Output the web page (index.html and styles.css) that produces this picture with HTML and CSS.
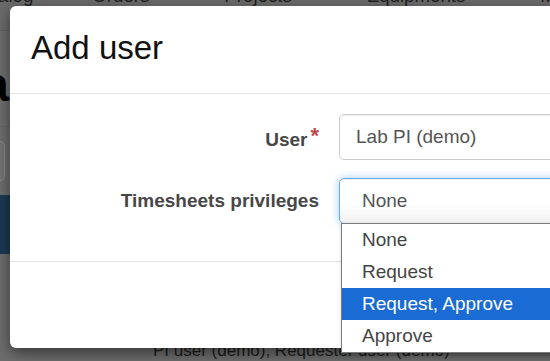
FILE: index.html
```html
<!DOCTYPE html>
<html lang="en">
<head>
    <meta charset="UTF-8">
    <meta name="viewport" content="width=device-width, initial-scale=1.0">
    <title>Add user</title>
    <link rel="stylesheet" href="styles.css">
</head>
<body>
    <div class="page">
        <nav class="topnav">
            <span class="first">Catalog</span>
            <span>Orders</span>
            <span>Projects</span>
            <span>Equipments</span>
            <span>Members</span>
        </nav>
        <div class="page-head">
            <div class="title-clip"><h1>Lab data</h1></div>
        </div>
        <div class="toolbar">
            <div class="box-clip"><div class="search-box"></div></div>
        </div>
        <div class="band"></div>
        <div class="page-rest">
            <p class="members">PI user (demo), Requester user (demo)</p>
        </div>
    </div>

    <div class="modal">
        <div class="modal-header">
            <h4>Add user</h4>
        </div>
        <div class="modal-body">
            <div class="form-row">
                <label class="required">User</label>
                <div class="input">Lab PI (demo)</div>
            </div>
            <div class="form-row">
                <label>Timesheets privileges</label>
                <div class="select-wrap">
                    <div class="input select focus">None</div>
                    <ul class="options">
                        <li>None</li>
                        <li>Request</li>
                        <li class="active">Request, Approve</li>
                        <li>Approve</li>
                    </ul>
                </div>
            </div>
        </div>
        <div class="modal-footer"></div>
    </div>
</body>
</html>
```

FILE: styles.css
```css
* {
    box-sizing: border-box;
}
body {
    margin: 0;
    font-family: 'Liberation Sans', Arial, sans-serif;
    background: #6e6e6e;
    overflow: hidden;
}

/* page behind the backdrop (already dimmed colours) */
.page {
    height: 361px;
    display: flex;
    flex-direction: column;
}
.topnav {
    height: 31px;
    margin-left: -31px;
    display: flex;
    gap: 75px;
    background: #6b6b6b;
    border-bottom: 1px solid #646464;
    font-size: 18.67px;
    line-height: 20px;
    color: #1e1e1e;
    white-space: nowrap;
}
.topnav span {
    margin-top: -14px;
}
.topnav .first {
    margin-right: -16px;
}
.page-head {
    height: 97px;
    border-bottom: 1px solid #666;
}
.title-clip {
    width: 9px;
    display: flex;
    justify-content: flex-end;
}
h1 {
    margin: 30px 0 0;
    font-size: 48px;
    line-height: 48px;
    font-weight: bold;
    color: #000;
    white-space: nowrap;
}
.toolbar {
    padding: 14px 0;
}
.box-clip {
    width: 5px;
    display: flex;
    justify-content: flex-end;
}
.search-box {
    flex: none;
    width: 200px;
    height: 40px;
    border: 1px solid #8a8a8a;
    border-radius: 5px;
    background: #747474;
}
.band {
    height: 59px;
    background: #1c3954;
}
.page-rest {
    flex: 1;
    padding: 87px 0 0 153px;
}
.members {
    margin: 0;
    font-size: 17px;
    line-height: 20px;
    color: #1c1c1c;
    white-space: nowrap;
}

/* modal */
.modal {
    position: absolute;
    left: 10px;
    top: 6px;
    width: 600px;
    background: #fff;
    border-radius: 6px;
    box-shadow: 0 5px 15px rgba(0, 0, 0, 0.5);
}
.modal-header {
    padding: 24px 20px 27px 21px;
    border-bottom: 1px solid #e5e5e5;
}
.modal-header h4 {
    margin: 0;
    font-size: 33px;
    line-height: 36px;
    font-weight: normal;
    color: #111;
}
.modal-body {
    padding: 20px 20px 37px;
    display: flex;
    flex-direction: column;
    gap: 18px;
}
.form-row {
    display: grid;
    grid-template-columns: 289px 1fr;
    column-gap: 20px;
    align-items: center;
}
.form-row label {
    text-align: right;
    font-weight: bold;
    font-size: 19px;
    color: #474747;
    white-space: nowrap;
}
.required::after {
    content: "*";
    color: #b94a48;
    font-size: 22px;
    margin-left: 3px;
    vertical-align: 3px;
}
.input {
    height: 46px;
    display: flex;
    align-items: center;
    padding: 0 16px;
    border: 1px solid #ccc;
    border-radius: 5px;
    font-size: 19px;
    color: #555;
    box-shadow: inset 0 1px 1px rgba(0, 0, 0, 0.075);
}
.select-wrap {
    position: relative;
}
.select {
    padding-left: 22px;
    background: linear-gradient(#fff 55%, #f1f1f1);
}
.select.focus {
    border-color: #66afe9;
    box-shadow: inset 0 1px 1px rgba(0, 0, 0, 0.075), 0 0 8px rgba(102, 175, 233, 0.6);
}
.options {
    position: absolute;
    top: calc(100% - 1px);
    left: 2px;
    width: 600px;
    margin: 0;
    padding: 0;
    list-style: none;
    background: #fff;
    border: 1px solid #7a7a7a;
    box-shadow: 1px 2px 4px rgba(0, 0, 0, 0.25);
    font-size: 19px;
    color: #444;
}
.options li {
    height: 32px;
    line-height: 32px;
    padding-left: 20px;
}
.options li.active {
    background: #1b6bd4;
    color: #fff;
}
.modal-footer {
    height: 87px;
    border-top: 1px solid #e5e5e5;
}
```
